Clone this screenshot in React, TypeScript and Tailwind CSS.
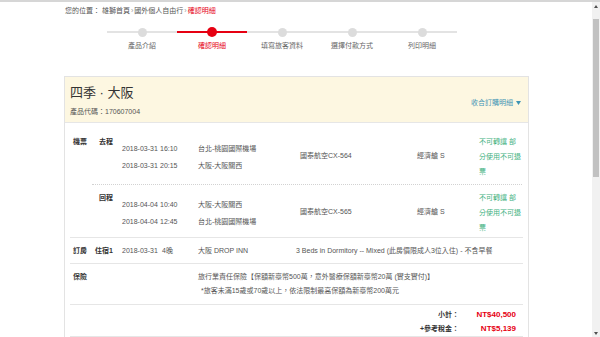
import React from "react";

const STEPS = ["產品介紹", "確認明細", "填寫旅客資料", "選擇付款方式", "列印明細"];

type Leg = { date: string; time: string; place: string };

const SEGMENTS: { label: string; legs: Leg[]; flight: string }[] = [
  {
    label: "去程",
    legs: [
      { date: "2018-03-31", time: "16:10", place: "台北-桃園國際機場" },
      { date: "2018-03-31", time: "20:15", place: "大阪-大阪關西" },
    ],
    flight: "國泰航空CX-564",
  },
  {
    label: "回程",
    legs: [
      { date: "2018-04-04", time: "10:40", place: "大阪-大阪關西" },
      { date: "2018-04-04", time: "12:45", place: "台北-桃園國際機場" },
    ],
    flight: "國泰航空CX-565",
  },
];

function Segment({ seg, last }: { seg: (typeof SEGMENTS)[number]; last: boolean }) {
  return (
    <div
      className={`flex items-center pt-[5px] ${
        last ? "pb-[2px]" : "pb-[5px] border-b border-dotted border-[#d2d2d2]"
      }`}
    >
      <div className="w-[30px] self-start pl-[7px] font-bold leading-[15px] text-[#333]">
        {seg.label}
      </div>
      <div className="w-[178px] text-[#555]">
        {seg.legs.map((l) => (
          <div key={l.time} className="flex leading-[17px]">
            <span className="w-[38px]">{l.date}</span>
            <span className="w-[38px]">{l.time}</span>
            <span>{l.place}</span>
          </div>
        ))}
      </div>
      <div className="w-[117px] text-[#555]">{seg.flight}</div>
      <div className="w-[62px] text-[#555]">經濟艙 S</div>
      <div className="w-[43px] leading-[15px] text-[#3fb27f]">
        不可轉讓 部<br />
        分使用不可退<br />票
      </div>
    </div>
  );
}

export default function App() {
  return (
    <div className="flex h-[337px] w-full flex-col overflow-hidden bg-white font-['Liberation_Sans','Noto_Sans_CJK_TC',sans-serif] text-[7px]">
      <div className="h-[2px] shrink-0 bg-[#d6d6d6]" />
      <div className="flex min-h-0 flex-1">
        <div className="flex-1">
          {/* Breadcrumb */}
          <div className="pl-[65px] pt-[3px] text-[7px] leading-[12px] text-[#555]">
            您的位置： 雄獅首頁<span className="mx-[1px] text-[#999]">›</span>國外個人自由行
            <span className="mx-[1px] text-[#999]">›</span>
            <span className="text-[#e60012]">確認明細</span>
          </div>

          {/* Steps */}
          <div className="ml-[107px] mt-[10px] grid w-[350px] grid-cols-5">
            {STEPS.map((s, i) => {
              const active = i === 1;
              return (
                <div key={s} className="flex flex-col items-center">
                  <div className="relative flex h-[10px] w-full items-center justify-center">
                    <div
                      className={`absolute inset-x-0 top-[4px] h-[2px] ${
                        active ? "bg-[#e60012]" : "bg-[#e3e3e3]"
                      }`}
                    />
                    <div
                      className={`relative rounded-full ${
                        active ? "h-[10px] w-[10px] bg-[#e60012]" : "h-[9px] w-[9px] bg-[#dcdcdc]"
                      }`}
                    />
                  </div>
                  <div
                    className={`mt-[4px] leading-[10px] ${
                      active ? "text-[#e60012]" : "text-[#666]"
                    }`}
                  >
                    {s}
                  </div>
                </div>
              );
            })}
          </div>

          {/* Order card */}
          <div className="ml-[64px] mt-[25px] w-[465px] border border-[#e3e3e3]">
            <div className="flex justify-between border-b border-[#e6e6e6] bg-[#fdf7e1] pl-[5px] pr-[7px]">
              <div className="pb-[5px] pt-[8px]">
                <div className="text-[13px] leading-[16px] text-[#333]">四季 · 大阪</div>
                <div className="mt-[6px] leading-[10px] text-[#555]">產品代碼：170607004</div>
              </div>
              <div className="mb-[14px] flex items-center gap-[3px] self-end leading-[10px] text-[#3d94b4]">
                收合訂購明細
                <svg width="5" height="4" viewBox="0 0 5 4">
                  <path d="M0 0h5L2.5 4z" fill="#3d94b4" />
                </svg>
              </div>
            </div>

            <div className="px-[5px] pt-[6px]">
              {/* Flights */}
              <div className="flex border-b border-[#e6e6e6]">
                <div className="w-[22px] pl-[3px] pt-[5px] font-bold leading-[15px] text-[#333]">
                  機票
                </div>
                <div className="w-[430px]">
                  {SEGMENTS.map((seg, i) => (
                    <Segment key={seg.label} seg={seg} last={i === SEGMENTS.length - 1} />
                  ))}
                </div>
              </div>

              {/* Hotel */}
              <div className="flex border-b border-[#e6e6e6] py-[5px] leading-[15px] text-[#555]">
                <div className="w-[25px] pl-[3px] font-bold text-[#333]">訂房</div>
                <div className="w-[27px] font-bold text-[#333]">住宿1</div>
                <div className="w-[40px]">2018-03-31</div>
                <div className="w-[36px]">4晚</div>
                <div className="w-[98px]">大阪 DROP INN</div>
                <div>3 Beds in Dormitory -- Mixed (此房價限成人3位入住) - 不含早餐</div>
              </div>

              {/* Insurance */}
              <div className="flex border-b border-[#e6e6e6] py-[6px] leading-[14px] text-[#555]">
                <div className="w-[128px] pl-[3px] font-bold text-[#333]">保險</div>
                <div>
                  <div>旅行業責任保險【保額新臺幣500萬，意外醫療保額新臺幣20萬 (實支實付)】</div>
                  <div className="pl-[3px]">*旅客未滿15歲或70歲以上，依法限制最高保額為新臺幣200萬元</div>
                </div>
              </div>

              {/* Totals */}
              <div className="border-b border-[#e6e6e6] pr-[7px] pt-[3px] leading-[14px]">
                <div className="flex justify-end">
                  <span className="font-bold text-[#333]">小計：</span>
                  <span className="w-[57px] text-right text-[8px] font-bold text-[#e60012]">
                    NT$40,500
                  </span>
                </div>
                <div className="flex justify-end">
                  <span className="font-bold text-[#333]">+參考稅金：</span>
                  <span className="w-[57px] text-right text-[8px] font-bold text-[#e60012]">
                    NT$5,139
                  </span>
                </div>
              </div>
            </div>
          </div>
        </div>

        {/* Scrollbar */}
        <div className="flex w-[8px] shrink-0 flex-col items-center bg-[#f1f1f1]">
          <svg className="mt-[3px]" width="4" height="3" viewBox="0 0 4 3">
            <path d="M2 0L4 3H0z" fill="#505050" />
          </svg>
          <div className="mt-[11px] h-[158px] w-[6px] bg-[#c1c1c1]" />
          <div className="flex-1" />
          <svg className="mb-[2px]" width="4" height="3" viewBox="0 0 4 3">
            <path d="M0 0h4L2 3z" fill="#505050" />
          </svg>
        </div>
      </div>
    </div>
  );
}
